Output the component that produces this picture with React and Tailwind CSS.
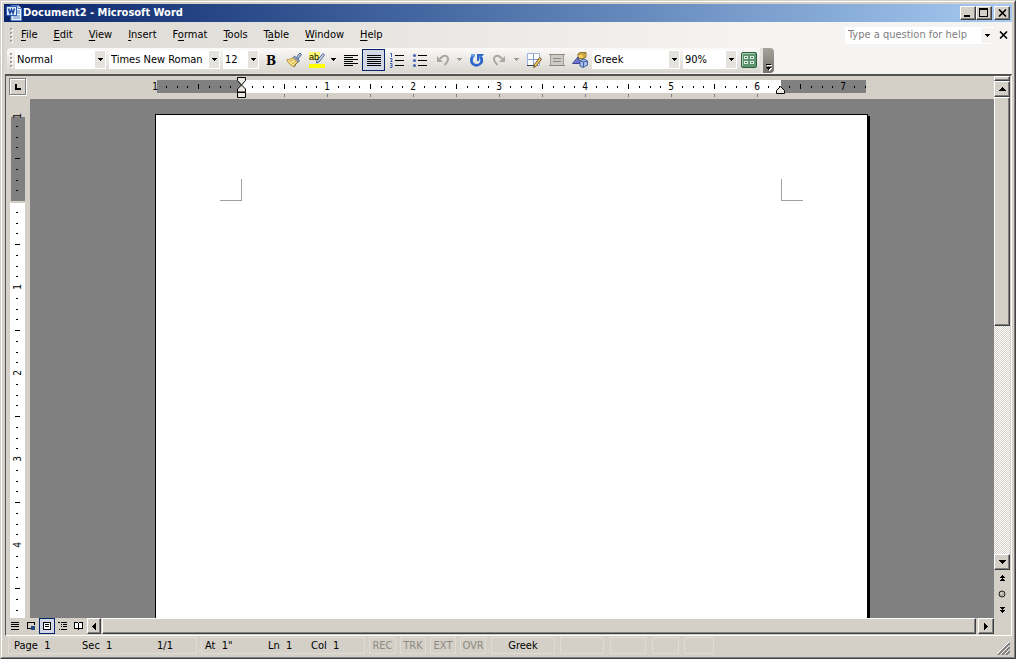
import { useEffect, useRef, useState } from 'react';

const INCH = 86;

const menus = [
  { before: '', key: 'F', after: 'ile' },
  { before: '', key: 'E', after: 'dit' },
  { before: '', key: 'V', after: 'iew' },
  { before: '', key: 'I', after: 'nsert' },
  { before: 'F', key: 'o', after: 'rmat' },
  { before: '', key: 'T', after: 'ools' },
  { before: 'T', key: 'a', after: 'ble' },
  { before: '', key: 'W', after: 'indow' },
  { before: '', key: 'H', after: 'elp' },
];

const raised =
  'border border-t-white border-l-white border-r-[#404040] border-b-[#404040] shadow-[inset_-1px_-1px_0_#808080] bg-[#d4d0c8]';

function Arrow({ dir = 'down', className = 'text-black' }) {
  const paths = {
    down: 'M0 0h7v1H0zM1 1h5v1H1zM2 2h3v1H2zM3 3h1v1H3z',
    up: 'M3 0h1v1H3zM2 1h3v1H2zM1 2h5v1H1zM0 3h7v1H0z',
    left: 'M3 0h1v7H3zM2 1h1v5H2zM1 2h1v3H1zM0 3h1v1H0z',
    right: 'M0 0h1v7H0zM1 1h1v5H1zM2 2h1v3H2zM3 3h1v1H3z',
  };
  const vertical = dir === 'down' || dir === 'up';
  return (
    <svg
      width={vertical ? 7 : 4}
      height={vertical ? 4 : 7}
      shapeRendering="crispEdges"
      fill="currentColor"
      className={`shrink-0 ${className}`}
    >
      <path d={paths[dir]} />
    </svg>
  );
}

function SmallArrow({ className = 'text-black' }) {
  return (
    <svg width="5" height="3" shapeRendering="crispEdges" fill="currentColor" className={`shrink-0 ${className}`}>
      <path d="M0 0h5v1H0zM1 1h3v1H1zM2 2h1v1H2z" />
    </svg>
  );
}

function Grip() {
  return (
    <svg width="3" height="16" shapeRendering="crispEdges" className="shrink-0">
      {[1, 5, 9, 13].map((y) => (
        <g key={y}>
          <rect x="1" y={y + 1} width="2" height="2" fill="#fff" />
          <rect x="0" y={y} width="2" height="2" fill="#a5a29c" />
        </g>
      ))}
    </svg>
  );
}

function WordIcon() {
  return (
    <svg width="16" height="16" viewBox="0 0 16 16" className="shrink-0">
      <path d="M5 .5h7.500L15.500 3.500v12H5z" fill="#e8f0fb" stroke="#5b84c4" />
      <path d="M12 .5v3h3.500" fill="#fff" stroke="#5b84c4" />
      <path d="M11 6h3M11 8h3M7 11h7M7 13h7" stroke="#5b84c4" />
      <rect x=".5" y="1.500" width="10" height="9" fill="#dfeafa" stroke="#2b5cb0" />
      <path d="M2.500 3.500l1.500 5 1.500-4 1.500 4 1.500-5" fill="none" stroke="#1c479c" strokeWidth="1.500" />
    </svg>
  );
}

function WindowButton({ label, children }) {
  return (
    <button type="button" aria-label={label} className={`flex h-[14px] w-4 items-center justify-center ${raised}`}>
      {children}
    </button>
  );
}

function TitleBar() {
  return (
    <header className="flex h-[18px] shrink-0 items-center bg-gradient-to-r from-[#0a246a] to-[#a6caf0] pr-[2px] pl-[2px]">
      <WordIcon />
      <h1 className="ml-[1px] flex-1 text-[11px] font-bold text-white">Document2 - Microsoft Word</h1>
      <WindowButton label="Minimize">
        <svg width="10" height="10" shapeRendering="crispEdges">
          <path d="M1 7h6v2H1z" />
        </svg>
      </WindowButton>
      <WindowButton label="Maximize">
        <svg width="10" height="10" shapeRendering="crispEdges">
          <path fillRule="evenodd" d="M0 0h9v9H0zM1 2v6h7V2z" />
        </svg>
      </WindowButton>
      <span className="w-[2px]" />
      <WindowButton label="Close">
        <svg width="9" height="8">
          <path d="M1 .5l7 7M8 .5l-7 7" stroke="#000" strokeWidth="1.600" />
        </svg>
      </WindowButton>
    </header>
  );
}

function MenuBar() {
  return (
    <nav className="flex h-[26px] shrink-0 items-center bg-gradient-to-r from-[#dbd8d1] to-[#f5f4f2] to-75% pl-[6px]">
      <Grip />
      <div className="flex flex-1">
        {menus.map((m) => (
          <button type="button" key={m.before + m.key + m.after} className="px-2">
            {m.before}
            <span className="underline underline-offset-2">{m.key}</span>
            {m.after}
          </button>
        ))}
      </div>
      <div className="flex h-[17px] w-[149px] items-center bg-white">
        <input
          type="text"
          aria-label="Type a question for help"
          placeholder="Type a question for help"
          className="min-w-0 flex-1 pl-[3px] outline-none placeholder:text-[#808080]"
        />
        <button type="button" aria-label="Recent questions" className="flex h-[15px] w-[13px] items-center justify-center bg-[#f5f4f2]">
          <SmallArrow />
        </button>
      </div>
      <button type="button" aria-label="Close document" className="flex w-[18px] justify-center">
        <svg width="9" height="8">
          <path d="M1 .5l7 7M8 .5l-7 7" stroke="#000" strokeWidth="1.600" />
        </svg>
      </button>
    </nav>
  );
}

function Combo({ label, options, className }) {
  const [value, setValue] = useState(options[0]);
  return (
    <div className={`relative h-[19px] shrink-0 bg-white ${className}`}>
      <select
        aria-label={label}
        value={value}
        onChange={(e) => setValue(e.target.value)}
        className="h-full w-full appearance-none pl-[2px] outline-none"
      >
        {options.map((o) => (
          <option key={o}>{o}</option>
        ))}
      </select>
      <span className="pointer-events-none absolute inset-y-[1px] right-[1px] flex w-[10px] items-center justify-center bg-[#e4e2dd]">
        <SmallArrow />
      </span>
    </div>
  );
}

function ToolButton({ label, active, children }) {
  return (
    <button
      type="button"
      aria-label={label}
      className={`flex h-[22px] w-[23px] shrink-0 items-center justify-center ${
        active ? 'border border-[#0a246a] bg-[#d2d8e6]' : ''
      }`}
    >
      <svg width="16" height="16" viewBox="0 0 16 16">
        {children}
      </svg>
    </button>
  );
}

function DropButton({ label, disabled }) {
  return (
    <button type="button" aria-label={label} className="flex h-[22px] w-[11px] shrink-0 items-center justify-center">
      <SmallArrow className={disabled ? 'text-[#a09d97]' : 'text-black'} />
    </button>
  );
}

function Toolbar() {
  return (
    <div className="flex h-[26px] shrink-0 items-start bg-gradient-to-r from-[#dbd8d1] to-[#f5f4f2] to-75% pl-[3px]">
      <div className="flex h-[25px] items-center rounded-l-sm bg-gradient-to-b from-[#fbfaf9] to-[#d9d6cf] pb-[2px] pl-[3px]">
        <Grip />
        <div className="flex items-center gap-[3px] pl-[2px]">
          <Combo label="Style" options={['Normal', 'Heading 1', 'Heading 2']} className="w-[91px]" />
          <Combo label="Font" options={['Times New Roman', 'Arial', 'Courier New']} className="w-[111px]" />
          <Combo label="Font size" options={['12', '10', '14', '16']} className="w-[36px]" />
        </div>
        <ToolButton label="Bold">
          <text x="3" y="13" fontFamily="'DejaVu Serif', serif" fontWeight="bold" fontSize="12">B</text>
        </ToolButton>
        <ToolButton label="Format Painter">
          <path d="M10.500 5.500L14 1l1.500 1.500-3.500 4.500z" fill="#b9c6dc" stroke="#4a5f8c" />
          <path d="M8.500 4l5 4.500-1.500 2L7 6z" fill="#93a4cc" stroke="#4c5f8c" strokeWidth=".8" />
          <path d="M7 5.500C5 7 3 7.500.8 7.800 2 11 5 14 8.500 14.800c.5-2 1.500-3 3.300-4.500z" fill="#fbe38c" stroke="#a8873a" strokeWidth=".9" />
          <path d="M3.500 9.500C5.500 9 7 8 8 7M6 12c1.500-1 3-2 4-3.500" fill="none" stroke="#cfa544" />
          <path d="M8.500 14.500c.5-2 1.500-3 3-4.200" fill="none" stroke="#6f5a20" />
        </ToolButton>
        <ToolButton label="Highlight">
          <path d="M0 0h11v8H0z" fill="#ffff70" />
          <path d="M14 1.500l1.500 1.500-5.500 7-2.500 1 .5-2.500z" fill="#c9d6ec" stroke="#51658f" />
          <text x="0" y="8" fontFamily="'Liberation Sans', sans-serif" fontSize="9">ab</text>
          <path d="M0 12h16v4H0z" fill="#ffff00" />
        </ToolButton>
        <DropButton label="Highlight color" />
        <ToolButton label="Align Left">
          <path d="M1 3.500h14M1 5.500h9M1 7.500h14M1 9.500h9M1 11.500h14M1 13.500h9" stroke="#000" />
        </ToolButton>
        <ToolButton label="Justify" active>
          <path d="M1 3.500h14M1 5.500h14M1 7.500h14M1 9.500h14M1 11.500h14M1 13.500h14" stroke="#000" />
        </ToolButton>
        <ToolButton label="Numbering">
          <path d="M6 3.500h9M6 8.500h9M6 13.500h9" stroke="#000" />
          <path d="M1 1.500h1.500V5M1 6.500h2v1.500L1.500 9.500H3.500M1 11.500h2v4H1M1.500 13.500H3" fill="none" stroke="#3f5fb5" />
        </ToolButton>
        <ToolButton label="Bullets">
          <path d="M6 3.500h9M6 8.500h9M6 13.500h9" stroke="#000" />
          <circle cx="2.500" cy="3.500" r="1.600" fill="#4a67b5" />
          <circle cx="2.500" cy="8.500" r="1.600" fill="#4a67b5" />
          <circle cx="2.500" cy="13.500" r="1.600" fill="#4a67b5" />
        </ToolButton>
        <ToolButton label="Undo">
          <path d="M2 4v6h6z" fill="#aaa7a1" />
          <path d="M5 7C7 4 10 3 12 4.500c2 2 1 5-2.500 8.500" fill="none" stroke="#aaa7a1" strokeWidth="2" />
        </ToolButton>
        <DropButton label="Undo history" disabled />
        <ToolButton label="Repeat">
          <path d="M4.500 3.500C1.500 6 2 10 4 12c2.500 2 6 1.500 8-1 1.200-2 1-4.500-.8-6.500" fill="none" stroke="#2f68cc" strokeWidth="2.800" />
          <path d="M8 2h7l-1.500 2-3 .5-.5 4.500H8z" fill="#2f68cc" />
          <path d="M2 2h4v2.500H2z" fill="#6f9fe8" />
        </ToolButton>
        <ToolButton label="Redo">
          <path d="M13 4v6H7z" fill="#aaa7a1" />
          <path d="M10 7C8 4 5 3 3 4.500c-2 2-1 5 2.500 8.500" fill="none" stroke="#aaa7a1" strokeWidth="2" />
        </ToolButton>
        <DropButton label="Redo history" disabled />
        <ToolButton label="Tables and Borders">
          <path d="M1.500 1.500h12v12h-12z" fill="#fff" stroke="#9db3dc" />
          <path d="M7.500 2v11M2 7.500h11" stroke="#7f9bd0" />
          <path d="M1 13.500h8" stroke="#33415f" />
          <path d="M13.500 5.500l2 1.500-5 7-3 1.500 1-3z" fill="#f0c766" stroke="#7a5a22" />
        </ToolButton>
        <ToolButton label="Text Box">
          <path d="M1.500 2.500h13v11h-13z" fill="#cdcac4" stroke="#a09d97" />
          <path d="M0 2.500h16M0 13.500h16M4 6.500h8M4 9.500h8" stroke="#8c8982" />
        </ToolButton>
        <ToolButton label="Drawing">
          <path d="M6 2l2-1.500h6v4.500L12 6.500H6z" fill="#f3cf62" stroke="#96752a" />
          <path d="M6 2h6v4M12 2l2-1.500" fill="none" stroke="#96752a" strokeWidth=".8" />
          <path d="M.5 11.500L6 5l2.500 6.500z" fill="#7076cf" stroke="#3d4690" />
          <path d="M8 8.500l4-1.500 3.500 2v4L11 15.500 8 14z" fill="#a9bfe8" stroke="#3f5fa5" />
          <path d="M8 8.500l3.500 1.500 4-1M11.500 10v5" fill="none" stroke="#3f5fa5" />
        </ToolButton>
        <div className="flex items-center gap-[3px] pl-[1px]">
          <Combo label="Language" options={['Greek', 'English']} className="w-[88px]" />
          <Combo label="Zoom" options={['90%', '100%', '150%']} className="w-[54px]" />
        </div>
        <ToolButton label="Options">
          <rect x=".5" y=".5" width="15" height="15" rx="1.500" fill="#5f9470" stroke="#2f5f42" />
          <path d="M1.500 14V1.500H14" fill="none" stroke="#a8cdb3" />
          <path d="M3 4h4v3H3zM9 4h4v3H9zM3 9h4v3H3zM9 9h4v3H9z" fill="#d9eedf" />
          <path d="M4 5h2v1H4zM10 5h2v1h-2zM4 10h2v1H4zM10 10h2v1h-2z" fill="#3c7050" />
        </ToolButton>
      </div>
      <button
        type="button"
        aria-label="Toolbar options"
        className="flex h-[25px] w-[14px] flex-col items-center justify-end gap-[2px] rounded-r-sm border-l-[3px] border-[#e4e2dd] bg-gradient-to-b from-[#a5a29c] to-[#77746e] pb-[3px]"
      >
        <span className="h-[1px] w-[5px] bg-black shadow-[1px_1px_0_#fff]" />
        <SmallArrow className="text-black drop-shadow-[1px_1px_0_#fff]" />
      </button>
    </div>
  );
}

// Tick marks every eighth of an inch, longer at each half, a number at each inch
function ticks(from, to) {
  const list = [];
  for (let i = from; i <= to; i++) {
    list.push({ i, pos: Math.round((i * INCH) / 8), half: i % 4 === 0, inch: i % 8 === 0 });
  }
  return list;
}

function HorizontalRuler() {
  return (
    <svg width="714" height="23" className="shrink-0 overflow-visible" shapeRendering="crispEdges">
      <rect x="2" y="4" width="84" height="13" fill="#808080" />
      <rect x="86" y="4" width="540" height="13" fill="#fff" />
      <rect x="626" y="4" width="85" height="13" fill="#808080" />
      {ticks(-7, 58).map(({ i, pos, half, inch }) => {
        const x = 86 + pos;
        if (i === 0) return null;
        if (inch) {
          return (
            <text key={i} x={x} y="14" textAnchor="middle" fontSize="10">
              {i / 8}
            </text>
          );
        }
        return <rect key={i} x={x} y={half ? 8 : 10} width="1" height={half ? 5 : 2} fill="#000" />;
      })}
      <text x="0" y="14" textAnchor="middle" fontSize="10">1</text>
      {ticks(1, 50)
        .filter((t) => t.half)
        .map(({ i, pos }) => (
          <rect key={i} x={86 + pos} y="18" width="1" height="3" fill="#808080" />
        ))}
      <g fill="#ece9e2" stroke="#000" shapeRendering="auto">
        <path d="M82.500 1.500h8v3l-4 4.500-4-4.500z" />
        <path d="M86.500 9l4 4v3h-8v-3z" />
        <path d="M82.500 16.500h8v5h-8z" />
        <path d="M625.500 10.500l4 4v3h-8v-3z" />
      </g>
    </svg>
  );
}

function VerticalRuler() {
  const ref = useRef(null);
  const [height, setHeight] = useState(0);

  useEffect(() => {
    const observer = new ResizeObserver(([entry]) => setHeight(Math.floor(entry.contentRect.height)));
    observer.observe(ref.current);
    return () => observer.disconnect();
  }, []);

  // Leave out a mark that would run past the bottom edge
  const last = Math.floor(((height - 108) * 8) / INCH);

  return (
    <div ref={ref} className="w-6 shrink-0 overflow-hidden bg-[#d4d0c8] pl-1">
      <svg width="15" height={height} shapeRendering="crispEdges">
        <rect x="1" y="18" width="14" height="84" fill="#808080" />
        <rect x="0" y="104" width="15" height={Math.max(0, height - 104)} fill="#fff" />
        <text transform="translate(11 17) rotate(-90)" textAnchor="middle" fontSize="10">1</text>
        {ticks(-7, last).map(({ i, pos, half, inch }) => {
          const y = 102 + pos;
          if (i === 0) return null;
          if (inch) {
            return (
              <text key={i} transform={`translate(11 ${y}) rotate(-90)`} textAnchor="middle" fontSize="10">
                {i / 8}
              </text>
            );
          }
          return <rect key={i} x={half ? 5 : 6} y={y} width={half ? 5 : 2} height="1" fill="#000" />;
        })}
      </svg>
    </div>
  );
}

function ViewButton({ label, active, children }) {
  return (
    <button
      type="button"
      aria-label={label}
      className={`flex h-4 w-4 items-center justify-center ${active ? 'border border-[#0a246a] bg-[#d2d8e6]' : ''}`}
    >
      <svg width="10" height="10" shapeRendering="crispEdges" fill="none" stroke="#000" className="shrink-0">
        {children}
      </svg>
    </button>
  );
}

function HorizontalScroll() {
  return (
    <div className="flex h-4 shrink-0 bg-[#d4d0c8]">
      <div className="flex pl-[1px]">
        <ViewButton label="Normal View">
          <path d="M1 1.500h8M1 3.500h8M1 5.500h8M1 8.500h8" />
        </ViewButton>
        <ViewButton label="Web Layout View">
          <path d="M5 7.500H1.500v-6h7V4" />
          <path d="M5 5h4v4H5z" fill="#27477f" stroke="none" />
        </ViewButton>
        <ViewButton label="Print Layout View" active>
          <path d="M1.500 1.500h7v7h-7zM3 3.500h4M3 5.500h4" fill="#fff" />
        </ViewButton>
        <ViewButton label="Outline View">
          <path d="M0 1.500h2M3 1.500h6M3 3.500h1M5 3.500h4M3 5.500h1M5 5.500h4M1 8.500h1M3 8.500h6" />
        </ViewButton>
        <ViewButton label="Reading Layout">
          <path d="M.5 1.500h3l1 1 1-1h3v6h-3l-1 1-1-1h-3zM4.500 2v7" fill="#fff" />
        </ViewButton>
      </div>
      <button type="button" aria-label="Scroll left" className={`flex h-4 w-[14px] items-center justify-center ${raised}`}>
        <Arrow dir="left" />
      </button>
      <div className={`mr-[2px] ml-[1px] h-4 flex-1 ${raised}`} />
      <button type="button" aria-label="Scroll right" className={`flex h-4 w-4 items-center justify-center ${raised}`}>
        <Arrow dir="right" />
      </button>
    </div>
  );
}

function VerticalScroll() {
  return (
    <div className="flex w-4 shrink-0 flex-col bg-[#d4d0c8]">
      <div className={`h-[5px] w-4 shrink-0 ${raised}`} />
      <button type="button" aria-label="Scroll up" className={`flex h-4 w-4 shrink-0 items-center justify-center ${raised}`}>
        <Arrow dir="up" />
      </button>
      <div className="min-h-0 flex-1 bg-[repeating-conic-gradient(#fff_0_25%,#d4d0c8_0_50%)] bg-[size:2px_2px]">
        <div className={`h-1/2 w-4 ${raised}`} />
      </div>
      <button type="button" aria-label="Scroll down" className={`flex h-4 w-4 shrink-0 items-center justify-center ${raised}`}>
        <Arrow />
      </button>
      <button type="button" aria-label="Previous page" className="flex h-4 w-4 shrink-0 items-center justify-center">
        <svg width="5" height="7" shapeRendering="crispEdges">
          <path d="M2 0h1v1H2zM1 1h3v1H1zM0 2h5v1H0zM2 3h1v1H2zM1 4h3v1H1zM0 5h5v1H0z" />
        </svg>
      </button>
      <button type="button" aria-label="Select browse object" className="flex h-4 w-4 shrink-0 items-center justify-center">
        <svg width="8" height="8">
          <circle cx="4" cy="4" r="3" fill="#b5b2aa" stroke="#222" />
          <path d="M2.500 4L4 2.500" stroke="#fff" />
        </svg>
      </button>
      <button type="button" aria-label="Next page" className="flex h-4 w-4 shrink-0 items-center justify-center">
        <svg width="5" height="7" shapeRendering="crispEdges">
          <path d="M0 0h5v1H0zM1 1h3v1H1zM2 2h1v1H2zM0 3h5v1H0zM1 4h3v1H1zM2 5h1v1H2z" />
        </svg>
      </button>
      <div className="h-4 shrink-0" />
    </div>
  );
}

function Page() {
  return (
    <article className="h-[924px] w-[713px] shrink-0 border border-black bg-white shadow-[2px_2px_0_#000]">
      <div className="flex justify-between px-16 pt-16">
        <span className="h-[22px] w-[22px] border-r border-b border-[#a0a0a0]" />
        <span className="h-[22px] w-[22px] border-b border-l border-[#a0a0a0]" />
      </div>
    </article>
  );
}

function Panel({ className, children }) {
  return (
    <div className={`flex h-[17px] shrink-0 items-center border border-[#dfdcd5] ${className}`}>{children}</div>
  );
}

function StatusBar() {
  return (
    <footer className="flex h-[19px] shrink-0 items-center gap-1 overflow-hidden pl-1">
      <Panel className="w-[189px] pl-[5px]">
        <span className="w-[68px]">Page&nbsp; 1</span>
        <span className="w-[75px]">Sec&nbsp; 1</span>
        <span>1/1</span>
      </Panel>
      <Panel className="w-[164px] pl-[3px]">
        <span className="w-[63px]">At&nbsp; 1"</span>
        <span className="w-[43px]">Ln&nbsp; 1</span>
        <span>Col&nbsp; 1</span>
      </Panel>
      <Panel className="w-[27px] justify-center text-[#8d8a84]">REC</Panel>
      <Panel className="w-[26px] justify-center text-[#8d8a84]">TRK</Panel>
      <Panel className="w-[26px] justify-center text-[#8d8a84]">EXT</Panel>
      <Panel className="w-[26px] justify-center text-[#8d8a84]">OVR</Panel>
      <Panel className="ml-[1px] w-[64px] justify-center">Greek</Panel>
      <Panel className="ml-[1px] w-[44px]" />
      <Panel className="ml-[2px] w-[36px]" />
      <Panel className="ml-[2px] w-[27px]" />
      <Panel className="ml-[1px] w-[30px]" />
      <svg width="13" height="13" className="mr-[2px] ml-auto shrink-0 self-end">
        <path d="M1 13L13 1M5 13l8-8M9 13l4-4" stroke="#808080" strokeWidth="2" />
        <path d="M0 12L12 0M4 12l8-8M8 12l4-4" stroke="#fff" />
      </svg>
    </footer>
  );
}

export default function App() {
  return (
    <div className="flex h-screen flex-col border border-[#d4d0c8] border-r-[#404040] border-b-[#404040] bg-[#d4d0c8] font-['DejaVu_Sans_Condensed','DejaVu_Sans',sans-serif] text-[11px] leading-4 text-black select-none">
      <div className="flex min-h-0 flex-1 flex-col border border-white border-r-[#808080] border-b-[#808080] p-[2px]">
        <TitleBar />
        <MenuBar />
        <Toolbar />
        <main className="ml-[1px] flex min-h-0 flex-1 border-t-2 border-r border-b border-l border-t-[#55534f] border-r-white border-b-white border-l-[#55534f] pr-[1px] pb-[1px]">
          <div className="flex min-w-0 flex-1 flex-col">
            <div className="flex h-[23px] shrink-0">
              <div className="w-6 shrink-0 pt-[2px] pl-[3px]">
                <button
                  type="button"
                  aria-label="Left tab"
                  className="flex h-[17px] w-[17px] items-center justify-center border border-[#808080] shadow-[inset_1px_1px_0_#fff,1px_1px_0_#fff]"
                >
                  <svg width="6" height="6" shapeRendering="crispEdges">
                    <path d="M0 0h2v4h4v2H0z" />
                  </svg>
                </button>
              </div>
              <div className="flex min-w-0 flex-1 justify-center">
                <HorizontalRuler />
              </div>
            </div>
            <div className="flex min-h-0 flex-1">
              <VerticalRuler />
              <div className="flex min-w-0 flex-1 items-start justify-center overflow-hidden bg-[#808080] pt-[15px] pr-[1px]">
                <Page />
              </div>
            </div>
            <HorizontalScroll />
          </div>
          <VerticalScroll />
        </main>
        <StatusBar />
      </div>
    </div>
  );
}
